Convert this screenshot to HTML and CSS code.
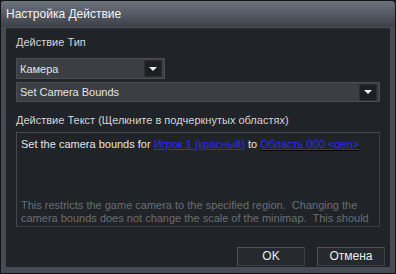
FILE: index.html
```html
<!DOCTYPE html>
<html>
<head>
<meta charset="utf-8">
<link rel="stylesheet" href="styles.css">
</head>
<body>
<div class="window">
  <div class="titlebar">Настройка Действие</div>
  <div class="content">
    <div class="label first">Действие Тип</div>
    <div class="combo small">
      <span class="combo-text">Камера</span>
      <span class="combo-btn"><svg width="8" height="4" viewBox="0 0 8 4"><path d="M0 0H8L4 4Z" fill="#f0f0f0"/></svg></span>
    </div>
    <div class="combo wide">
      <span class="combo-text">Set Camera Bounds</span>
      <span class="combo-btn"><svg width="8" height="4" viewBox="0 0 8 4"><path d="M0 0H8L4 4Z" fill="#f0f0f0"/></svg></span>
    </div>
    <div class="label second">Действие Текст (Щелкните в подчеркнутых областях)</div>
    <div class="textbox">
      <div class="action-line">Set the camera bounds for <span class="link">Игрок 1 (красный)</span> to <span class="link selected">Область 000 &lt;gen&gt;</span></div>
      <div class="desc">This restricts the game camera to the specified region.  Changing the
camera bounds does not change the scale of the minimap.  This should</div>
    </div>
    <div class="footer">
      <div class="btn">OK</div>
      <div class="btn">Отмена</div>
    </div>
  </div>
</div>
</body>
</html>
```
FILE: styles.css
```css
html, body {
  margin: 0;
  padding: 0;
  background: #1a1c1f;
}
body {
  width: 396px;
  height: 274px;
  overflow: hidden;
  font-family: "Liberation Sans", Arial, sans-serif;
  font-size: 11px;
}
.window {
  box-sizing: border-box;
  width: 396px;
  height: 274px;
  background: #464b54;
  border: 1px solid #121417;
  border-radius: 4px 5px 0 0;
  display: flex;
  flex-direction: column;
}
.titlebar {
  height: 26px;
  flex: none;
  background: linear-gradient(#6d737d, #3b4049);
  color: #f4f4f4;
  font-size: 12px;
  line-height: 26px;
  padding-left: 5px;
  border-radius: 3px 4px 0 0;
}
.content {
  flex: 1;
  margin: 1px 5px 6px 5px;
  background: #202327;
  padding: 6px 10px 0 10px;
  display: flex;
  flex-direction: column;
  border-top: 1px solid #2a2d31;
}
.label {
  color: #d6d6d6;
  line-height: 14px;
  height: 14px;
}
.combo {
  box-sizing: border-box;
  display: flex;
  align-items: center;
  background: #3b3e43;
  border: 1px solid #4c4f54;
  color: #e4e4e4;
}
.combo.small {
  margin-top: 9px;
  width: 149px;
  height: 21px;
}
.combo.wide {
  margin-top: 3px;
  width: 364px;
  height: 20px;
}
.combo-text {
  flex: 1;
  padding-left: 3px;
}
.combo-btn {
  box-sizing: border-box;
  width: 18px;
  height: 17px;
  margin-right: 2px;
  background: #1d1f23;
  border: 1px solid #2c2f33;
  display: flex;
  align-items: center;
  justify-content: center;
}
.label.second {
  margin-top: 11px;
}
.textbox {
  box-sizing: border-box;
  margin-top: 5px;
  width: 364px;
  height: 95px;
  border: 1px solid #46494e;
  border-right-color: #3a3d41;
  border-bottom-color: #3a3d41;
  padding: 4px 4px 0 4px;
  overflow: hidden;
  display: flex;
  flex-direction: column;
}
.action-line {
  color: #e6e6e6;
  line-height: 14px;
  white-space: nowrap;
}
.link {
  color: #2a2aff;
  text-decoration: underline;
}
.link.selected {
  border-bottom: 1px solid #000;
}
.desc {
  margin-top: 48px;
  color: #6b6e72;
  line-height: 13px;
  white-space: pre;
}
.footer {
  display: flex;
  justify-content: flex-end;
  gap: 12px;
  margin-top: 20px;
  margin-right: -5px;
}
.btn {
  box-sizing: border-box;
  width: 68px;
  height: 19px;
  background: #26292d;
  border: 1px solid #4e5156;
  border-right-color: #3c3f43;
  border-bottom-color: #3c3f43;
  color: #ececec;
  font-size: 12px;
  line-height: 17px;
  text-align: center;
}
```
